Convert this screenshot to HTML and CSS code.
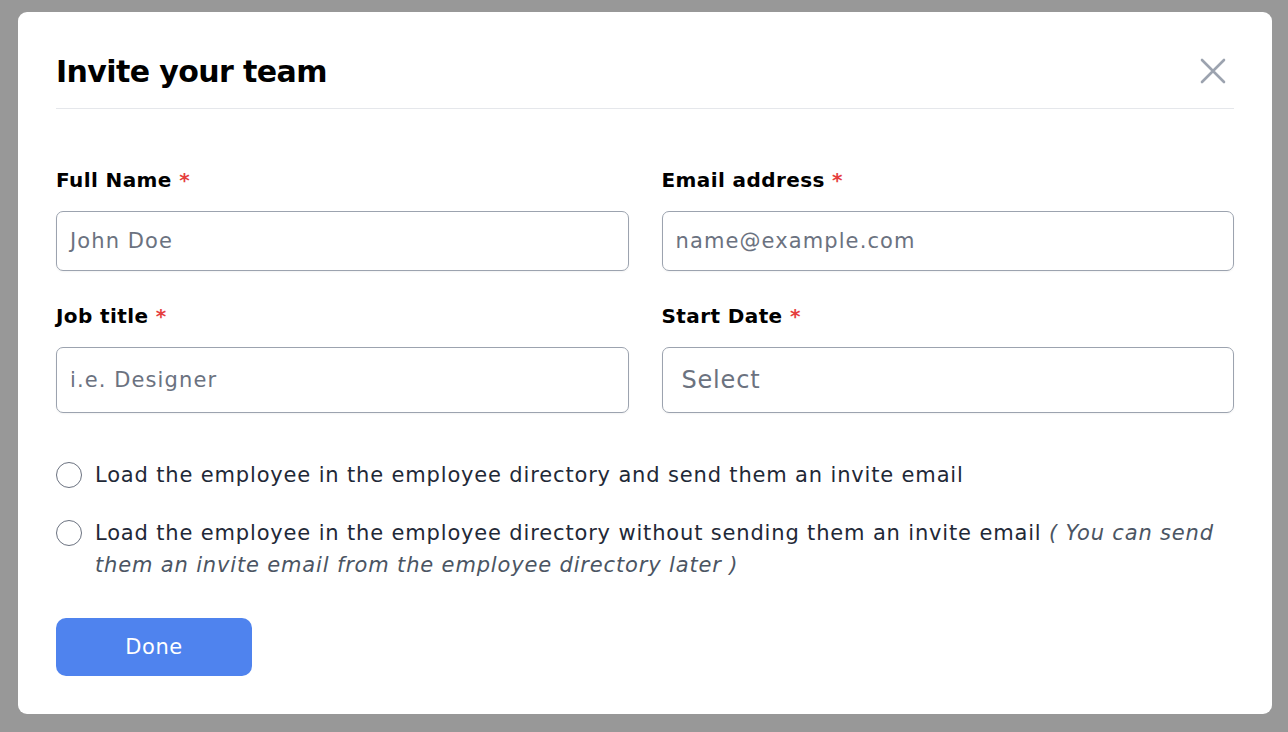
FILE: index.html
```html
<!DOCTYPE html>
<html>
<head>
<meta charset="utf-8">
<link rel="stylesheet" href="styles.css">
</head>
<body>
<div class="overlay">
  <div class="modal">
    <div class="header">
      <h1 class="title">Invite your team</h1>
      <button class="close" aria-label="Close">
        <svg width="26" height="26" viewBox="0 0 26 26"><path d="M2 2L24 24M24 2L2 24" stroke="#9ca3af" stroke-width="2.6" stroke-linecap="round"/></svg>
      </button>
    </div>
    <div class="grid">
      <div class="field">
        <label class="label">Full Name <span class="req">*</span></label>
        <div class="input"><span class="ph">John Doe</span></div>
      </div>
      <div class="field">
        <label class="label">Email address <span class="req">*</span></label>
        <div class="input"><span class="ph">name@example.com</span></div>
      </div>
      <div class="field">
        <label class="label">Job title <span class="req">*</span></label>
        <div class="input tall"><span class="ph">i.e. Designer</span></div>
      </div>
      <div class="field">
        <label class="label">Start Date <span class="req">*</span></label>
        <div class="input tall select"><span class="ph big">Select</span></div>
      </div>
    </div>
    <div class="options">
      <div class="option">
        <span class="radio"></span>
        <p class="otext">Load the employee in the employee directory and send them an invite email</p>
      </div>
      <div class="option">
        <span class="radio"></span>
        <p class="otext">Load the employee in the employee directory without sending them an invite email <em>( You can send them an invite email from the employee directory later )</em></p>
      </div>
    </div>
    <button class="done">Done</button>
  </div>
</div>
</body>
</html>
```
FILE: styles.css
```css
* { box-sizing: border-box; }
html, body { margin: 0; padding: 0; }
body {
  width: 1288px;
  height: 732px;
  background: #989898;
  font-family: "DejaVu Sans", "Noto Sans", sans-serif;
  overflow: hidden;
}
.overlay {
  padding: 12px 16px 18px 18px;
  height: 732px;
}
.modal {
  background: #fff;
  border-radius: 9px;
  height: 702px;
  padding: 0 38px;
  display: flex;
  flex-direction: column;
}
.header {
  display: flex;
  justify-content: space-between;
  align-items: center;
  height: 97px;
  padding-top: 22px;
  border-bottom: 1px solid #e5e7eb;
}
.title {
  margin: 0;
  font-size: 30px;
  font-weight: 700;
  color: #000;
  letter-spacing: -0.6px;
}
.close {
  border: 0;
  background: none;
  padding: 0;
  margin-right: 8px;
  width: 26px;
  height: 26px;
  display: flex;
}
.grid {
  display: grid;
  grid-template-columns: 1fr 1fr;
  column-gap: 33px;
  row-gap: 33px;
  margin-top: 59px;
}
.field { display: flex; flex-direction: column; }
.label {
  font-size: 20px;
  font-weight: 700;
  color: #000;
  margin-bottom: 19px;
  line-height: 24px;
  letter-spacing: 0.4px;
}
.req { color: #e53e3e; }
.input {
  height: 60px;
  border: 1px solid #9ca3af;
  border-radius: 7px;
  display: flex;
  align-items: center;
  padding: 0 13px;
  box-shadow: 0 1px 2px rgba(0,0,0,0.05);
}
.input.tall { height: 66px; }
.input.select { padding-left: 19px; }
.ph {
  font-size: 21px;
  color: #6b7280;
  letter-spacing: 1.1px;
}
.ph.big { font-size: 24px; letter-spacing: 0.8px; }
.options {
  margin-top: 46px;
  display: flex;
  flex-direction: column;
  gap: 26px;
}
.option {
  display: flex;
  align-items: flex-start;
  gap: 13px;
}
.radio {
  flex: none;
  width: 26px;
  height: 26px;
  border: 1px solid #6b7280;
  border-radius: 50%;
  margin-top: 3px;
}
.otext {
  margin: 0;
  font-size: 21px;
  line-height: 32px;
  color: #1f2937;
  letter-spacing: 0.84px;
}
.otext em { color: #4b5563; }
.done {
  margin-top: 37px;
  width: 196px;
  height: 58px;
  border: 0;
  border-radius: 10px;
  background: #4f83ee;
  color: #fff;
  font-family: inherit;
  font-size: 21px;
  font-weight: 500;
  letter-spacing: 0.6px;
}
```
